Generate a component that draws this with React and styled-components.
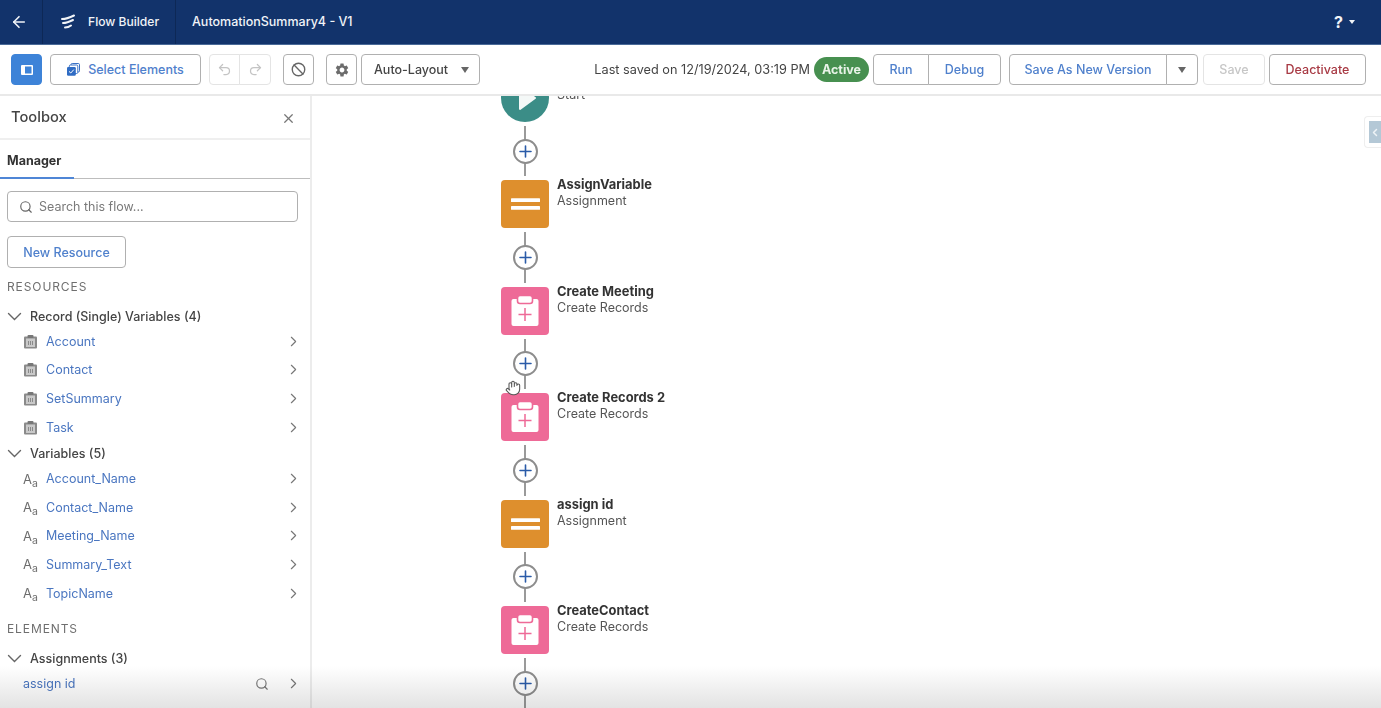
import React from "react";
import styled, { createGlobalStyle } from "styled-components";
import { ArrowLeft, Undo2, Redo2, Ban, ChevronRight, ChevronLeft, Search, X, Hand } from "lucide-react";
import { MdSettings } from "react-icons/md";

const Global = createGlobalStyle`
  html, body { margin: 0; padding: 0; background: #fff; }
  body { font-family: Inter, "Noto Sans", "Liberation Sans", sans-serif; color: #3e3e3c; overflow: hidden; }
  #root { width: 1381px; height: 708px; overflow: hidden; filter: blur(0.45px); }
  * { box-sizing: border-box; }
`;

const Page = styled.div`
  position: relative;
  width: 1381px;
  height: 708px;
  display: flex;
  flex-direction: column;
  overflow: hidden;
`;

const Header = styled.header`
  height: 45px;
  flex: none;
  background: #12336b;
  border-bottom: 1px solid #4a6a98;
  color: #f1f4f8;
  display: flex;
  align-items: stretch;
  font-size: 12.5px;
  font-weight: 500;
`;
const HeaderCell = styled.div`
  display: flex;
  align-items: center;
  width: ${(p) => p.$w}px;
  padding-left: ${(p) => p.$pl}px;
  padding-bottom: 1px;
  border-right: 1px solid #0d2856;
  gap: 13px;
`;
const ProductName = styled.span`
  font-size: 12.1px;
`;
const HeaderTitle = styled.div`
  display: flex;
  align-items: center;
  padding: 0 0 1px 16px;
  flex: 1;
`;
const Help = styled.div`
  display: flex;
  align-items: center;
  gap: 6px;
  padding-right: 26px;
  font-size: 16px;
  font-weight: 700;
`;
const TinyCaret = styled.span`
  width: 0;
  height: 0;
  border-left: 3px solid transparent;
  border-right: 3px solid transparent;
  border-top: 4px solid #f1f4f8;
`;

const Toolbar = styled.div`
  height: 51px;
  flex: none;
  background: #fff;
  border-bottom: 2px solid #e9e9e9;
  display: flex;
  align-items: center;
  padding: 0 15px 0 11px;
`;
const Btn = styled.button`
  height: ${(p) => p.$h || 31}px;
  width: ${(p) => (p.$w ? `${p.$w}px` : "auto")};
  margin-left: ${(p) => p.$ml || 0}px;
  padding: 0;
  background: #fff;
  border: 1px solid ${(p) => (p.$faint ? "#e4e4e4" : "#b0b0b0")};
  border-radius: 4px;
  color: ${(p) => p.$color || "#4f80cc"};
  font: 500 12.5px Inter, "Noto Sans", sans-serif;
  display: flex;
  align-items: center;
  justify-content: center;
  gap: ${(p) => p.$gap || 0}px;
  flex: none;
`;
const PanelToggle = styled(Btn)`
  background: #3d83d8;
  border-color: #3d83d8;
`;
const BtnGroup = styled.div`
  display: flex;
  flex: none;
  margin-left: ${(p) => p.$ml || 0}px;
  & > button { margin-left: 0; border-radius: 0; }
  & > button + button { border-left-width: 1px; margin-left: -1px; }
  & > button:first-child { border-radius: 4px 0 0 4px; }
  & > button:last-child { border-radius: 0 4px 4px 0; }
`;
const Spacer = styled.div`
  flex: 1;
`;
const Saved = styled.span`
  font-size: 12.7px;
  color: #444;
  white-space: nowrap;
`;
const ActivePill = styled.span`
  width: 55px;
  height: 25px;
  margin-left: 4px;
  border-radius: 13px;
  background: #479050;
  color: #e8f3e8;
  font-size: 12.5px;
  font-weight: 700;
  display: flex;
  align-items: center;
  justify-content: center;
`;
const Caret = styled.span`
  width: 0;
  height: 0;
  border-left: 4.5px solid transparent;
  border-right: 4.5px solid transparent;
  border-top: 6px solid #666;
`;
const SelectLabel = styled.span`
  color: #444;
  flex: 1;
  text-align: left;
  padding-left: 12px;
`;
const SelectCaret = styled(Caret)`
  margin-right: 10px;
`;

const Body = styled.div`
  flex: 1;
  display: flex;
  min-height: 0;
`;

const Sidebar = styled.aside`
  width: 312px;
  flex: none;
  border-right: 2px solid #ececec;
  background: #fff;
  overflow: hidden;
`;
const ToolboxHead = styled.div`
  height: 44px;
  padding: 0 14px 0 11px;
  border-bottom: 2px solid #efefef;
  display: flex;
  align-items: center;
  justify-content: space-between;
  font-size: 14.7px;
  font-weight: 500;
  color: #444;
  & > svg { margin-top: 2px; }
`;
const Tabs = styled.div`
  height: 39px;
  border-bottom: 1px solid #bdbdbd;
`;
const Tab = styled.div`
  width: 74px;
  height: 39px;
  padding: 13px 0 0 7px;
  font-size: 12.5px;
  font-weight: 700;
  color: #333;
  border-bottom: 2px solid #4f86d6;
`;
const SearchBox = styled.div`
  height: 31px;
  margin: 12px 12px 0 7px;
  border: 1px solid #b0b0b0;
  border-radius: 4px;
  display: flex;
  align-items: center;
  gap: 6px;
  padding-left: 11px;
  color: #7a7a7a;
  font-size: 12.5px;
`;
const NewResource = styled(Btn)`
  margin: 14px 0 0 7px;
  width: 119px;
  height: 32px;
`;
const Section = styled.div`
  padding-left: 7px;
  font-size: 12px;
  letter-spacing: 0.9px;
  color: #6f6f6f;
  height: 20px;
  line-height: 20px;
  margin-top: ${(p) => p.$mt}px;
`;
const GroupRow = styled.div`
  height: 20px;
  margin: ${(p) => p.$mt}px 0 1px;
  padding-left: 7px;
  display: flex;
  align-items: center;
  gap: 8px;
  font-size: 12.5px;
  color: #444;
  font-weight: 500;
`;
const ItemRow = styled.div`
  height: 28.6px;
  display: flex;
  align-items: center;
  padding: 0 8px 0 ${(p) => p.$pl || 23}px;
  font-size: 12.5px;
`;
const ItemLabel = styled.span`
  color: #4a76c0;
  flex: 1;
  padding-left: ${(p) => p.$pl ?? 8}px;
`;
const TextType = styled.span`
  width: 15px;
  color: #6d6d6d;
  font-size: 13px;
  display: flex;
  align-items: flex-start;
  line-height: 14px;
  & > small { font-size: 10.5px; position: relative; top: 5px; }
`;
const Tools = styled.span`
  display: flex;
  align-items: center;
  gap: 16px;
`;

const Canvas = styled.main`
  position: relative;
  flex: 1;
  overflow: hidden;
  background: #fff;
`;
const FlowColumn = styled.div`
  margin-top: -22px;
  padding-left: 189px;
  display: flex;
  flex-direction: column;
`;
const NodeRow = styled.div`
  display: flex;
  height: 48px;
  gap: 8px;
`;
const NodeIcon = styled.div`
  width: 48px;
  height: 48px;
  flex: none;
  border-radius: ${(p) => (p.$round ? "50%" : "4px")};
  background: ${(p) => p.$bg};
  display: flex;
  align-items: center;
  justify-content: center;
`;
const NodeText = styled.div`
  margin-top: ${(p) => p.$mt}px;
  font-size: 12.5px;
  line-height: 16px;
  color: #555;
  white-space: nowrap;
`;
const NodeTitle = styled.div`
  font-size: 12.9px;
  font-weight: 700;
  color: #333;
`;
const Connector = styled.div`
  width: 48px;
  height: 58.4px;
  position: relative;
  display: flex;
  align-items: center;
  justify-content: center;
  &::before {
    content: "";
    position: absolute;
    left: 23px;
    top: 4px;
    bottom: 4px;
    width: 2px;
    background: #9a9a9a;
  }
`;
const AddCircle = styled.div`
  position: relative;
  width: 25px;
  height: 25px;
  border-radius: 50%;
  background: #fff;
  border: 2px solid #8d8d8d;
  display: flex;
  align-items: center;
  justify-content: center;
`;
const SideTab = styled.div`
  position: absolute;
  top: 20px;
  right: 0;
  width: 17px;
  height: 32px;
  padding: 4px 0 4px 4px;
  background: #fff;
  border: 1px solid #eee;
  border-right: 0;
  border-radius: 4px 0 0 4px;
  display: flex;
  align-items: center;
`;
const SideTabFace = styled.div`
  width: 100%;
  height: 100%;
  background: #b4c8d6;
  display: flex;
  align-items: center;
  justify-content: flex-end;
  overflow: hidden;
`;
const Cursor = styled.div`
  position: absolute;
  left: 193px;
  top: 284px;
  width: 16px;
  height: 16px;
`;
const BottomFade = styled.div`
  position: absolute;
  left: 0;
  right: 0;
  bottom: 0;
  height: 42px;
  background: linear-gradient(to bottom, #fff, #e3e3e3);
  mix-blend-mode: multiply;
  pointer-events: none;
`;

const FlowLogo = () => (
  <svg width="15" height="16" viewBox="0 0 15 16" fill="none" stroke="#f1f4f8" strokeWidth="2" strokeLinecap="round">
    <path d="M2 5 C5 5 9 4 14 1.5" />
    <path d="M3 9 C6 9 9 8 13 6" />
    <path d="M5 13.5 C7 13.5 9 13 11 11.5" />
  </svg>
);
const PanelIcon = () => (
  <svg width="12" height="10" viewBox="0 0 12 10">
    <rect width="12" height="10" rx="1" fill="#fff" />
    <rect x="4" y="1.5" width="6.5" height="7" fill="#3d83d8" />
  </svg>
);
const SelectIcon = () => (
  <svg width="13" height="13" viewBox="0 0 13 13">
    <rect x="4" y="0.5" width="8.5" height="8.5" rx="1.2" fill="none" stroke="#3a72c6" />
    <rect x="2.3" y="2" width="8.5" height="8.5" rx="1.2" fill="#fff" stroke="#3a72c6" />
    <rect x="0" y="4" width="8.8" height="8.8" rx="1.2" fill="#2f6cc4" />
    <path d="M2 8.4 L3.8 10 L6.8 6.6" fill="none" stroke="#fff" strokeWidth="1" />
  </svg>
);
const RecordIcon = () => (
  <svg width="15" height="15" viewBox="0 0 15 15">
    <rect x="1" y="2.5" width="13" height="12" rx="1" fill="#8a8a8a" />
    <rect x="3" y="4.5" width="9" height="8.5" fill="#c9c9c9" />
    <rect x="4.5" y="1" width="6" height="3" rx="1" fill="#777" />
    <path d="M5.5 7v4M7.5 7v4M9.5 7v4" stroke="#8a8a8a" />
  </svg>
);
const AssignGlyph = () => (
  <svg width="29" height="16" viewBox="0 0 29 16" fill="#fff">
    <rect y="2.2" width="29" height="3.9" rx="0.6" />
    <rect y="9.9" width="29" height="3.9" rx="0.6" />
  </svg>
);
const RecordsGlyph = () => (
  <svg width="28" height="32" viewBox="0 0 28 32">
    <rect x="0.5" y="4" width="27" height="27" rx="2" fill="#fff" />
    <rect x="6.5" y="0.5" width="15" height="8" rx="2.5" fill="#fff" stroke="#ee6a97" strokeWidth="1.6" />
    <path d="M14 13v13M7.5 19.5h13" stroke="#ee6a97" strokeWidth="1.5" />
  </svg>
);
const PlayGlyph = () => (
  <svg width="19" height="26" viewBox="0 0 19 26" style={{ marginLeft: 4 }}>
    <path d="M2 2 L17 13 L2 24 Z" fill="#f4f8f7" stroke="#f4f8f7" strokeWidth="2" strokeLinejoin="round" />
  </svg>
);
const PlusGlyph = () => (
  <svg width="13" height="13" viewBox="0 0 13 13">
    <path d="M6.5 1v11M1 6.5h11" stroke="#2a5ba8" strokeWidth="1.6" strokeLinecap="round" />
  </svg>
);
const GroupChevron = () => (
  <svg width="15" height="15" viewBox="0 0 15 15" fill="none" stroke="#666" strokeWidth="1.4" strokeLinecap="round">
    <path d="M1.5 4.5 L7.5 10.5 L13.5 4.5" />
  </svg>
);

const recordVars = ["Account", "Contact", "SetSummary", "Task"];
const textVars = ["Account_Name", "Contact_Name", "Meeting_Name", "Summary_Text", "TopicName"];
const nodes = [
  { title: "AssignVariable", type: "Assignment", kind: "assign" },
  { title: "Create Meeting", type: "Create Records", kind: "record" },
  { title: "Create Records 2", type: "Create Records", kind: "record" },
  { title: "assign id", type: "Assignment", kind: "assign" },
  { title: "CreateContact", type: "Create Records", kind: "record" },
];

const Step = () => (
  <Connector>
    <AddCircle>
      <PlusGlyph />
    </AddCircle>
  </Connector>
);
const More = () => <ChevronRight size={17} color="#777" strokeWidth={1.6} />;

export default function App() {
  return (
    <Page>
      <Global />
      <Header>
        <HeaderCell $w={43} $pl={10}>
          <ArrowLeft size={18} strokeWidth={2.2} />
        </HeaderCell>
        <HeaderCell $w={133} $pl={17}>
          <FlowLogo />
          <ProductName>Flow Builder</ProductName>
        </HeaderCell>
        <HeaderTitle>AutomationSummary4 - V1</HeaderTitle>
        <Help>
          ?<TinyCaret />
        </Help>
      </Header>
      <Toolbar>
        <PanelToggle $w={31}>
          <PanelIcon />
        </PanelToggle>
        <Btn $w={151} $ml={8} $gap={8}>
          <SelectIcon />
          Select Elements
        </Btn>
        <BtnGroup $ml={8}>
          <Btn $w={31} $faint>
            <Undo2 size={15} color="#c4c4c4" />
          </Btn>
          <Btn $w={32} $faint>
            <Redo2 size={15} color="#c4c4c4" />
          </Btn>
        </BtnGroup>
        <Btn $w={31} $ml={12}>
          <Ban size={15} color="#666" strokeWidth={2.2} />
        </Btn>
        <Btn $w={31} $ml={12}>
          <MdSettings size={16} color="#6c6c6c" />
        </Btn>
        <Btn $w={119} $ml={4} $color="#444">
          <SelectLabel>Auto-Layout</SelectLabel>
          <SelectCaret />
        </Btn>
        <Spacer />
        <Saved>Last saved on 12/19/2024, 03:19 PM</Saved>
        <ActivePill>Active</ActivePill>
        <BtnGroup $ml={4}>
          <Btn $w={56}>Run</Btn>
          <Btn $w={73}>Debug</Btn>
        </BtnGroup>
        <BtnGroup $ml={8}>
          <Btn $w={158}>Save As New Version</Btn>
          <Btn $w={32}>
            <Caret />
          </Btn>
        </BtnGroup>
        <Btn $w={62} $ml={5} $faint $color="#c6c6c6">
          Save
        </Btn>
        <Btn $w={97} $ml={4} $color="#a83a44">
          Deactivate
        </Btn>
      </Toolbar>
      <Body>
        <Sidebar>
          <ToolboxHead>
            Toolbox
            <X size={15} color="#777" />
          </ToolboxHead>
          <Tabs>
            <Tab>Manager</Tab>
          </Tabs>
          <SearchBox>
            <Search size={14} color="#666" />
            Search this flow...
          </SearchBox>
          <NewResource>New Resource</NewResource>
          <Section $mt={9}>RESOURCES</Section>
          <GroupRow $mt={9}>
            <GroupChevron />
            Record (Single) Variables (4)
          </GroupRow>
          {recordVars.map((name) => (
            <ItemRow key={name}>
              <RecordIcon />
              <ItemLabel>{name}</ItemLabel>
              <More />
            </ItemRow>
          ))}
          <GroupRow $mt={2}>
            <GroupChevron />
            Variables (5)
          </GroupRow>
          {textVars.map((name) => (
            <ItemRow key={name}>
              <TextType>
                A<small>a</small>
              </TextType>
              <ItemLabel>{name}</ItemLabel>
              <More />
            </ItemRow>
          ))}
          <Section $mt={12}>ELEMENTS</Section>
          <GroupRow $mt={9}>
            <GroupChevron />
            Assignments (3)
          </GroupRow>
          <ItemRow>
            <ItemLabel $pl={0}>assign id</ItemLabel>
            <Tools>
              <Search size={14} color="#777" />
              <More />
            </Tools>
          </ItemRow>
        </Sidebar>
        <Canvas>
          <FlowColumn>
            <NodeRow>
              <NodeIcon $round $bg="#3b8d87">
                <PlayGlyph />
              </NodeIcon>
              <NodeText $mt={13}>Start</NodeText>
            </NodeRow>
            {nodes.map((n) => (
              <React.Fragment key={n.title}>
                <Step />
                <NodeRow>
                  <NodeIcon $bg={n.kind === "assign" ? "#de8f2d" : "#ee6a97"}>
                    {n.kind === "assign" ? <AssignGlyph /> : <RecordsGlyph />}
                  </NodeIcon>
                  <NodeText $mt={-3}>
                    <NodeTitle>{n.title}</NodeTitle>
                    {n.type}
                  </NodeText>
                </NodeRow>
              </React.Fragment>
            ))}
            <Step />
          </FlowColumn>
          <SideTab>
            <SideTabFace>
              <ChevronLeft size={13} color="#eef3f6" strokeWidth={3} />
            </SideTabFace>
          </SideTab>
          <Cursor>
            <Hand size={16} color="#555" fill="#fff" strokeWidth={1.6} />
          </Cursor>
        </Canvas>
      </Body>
      <BottomFade />
    </Page>
  );
}
